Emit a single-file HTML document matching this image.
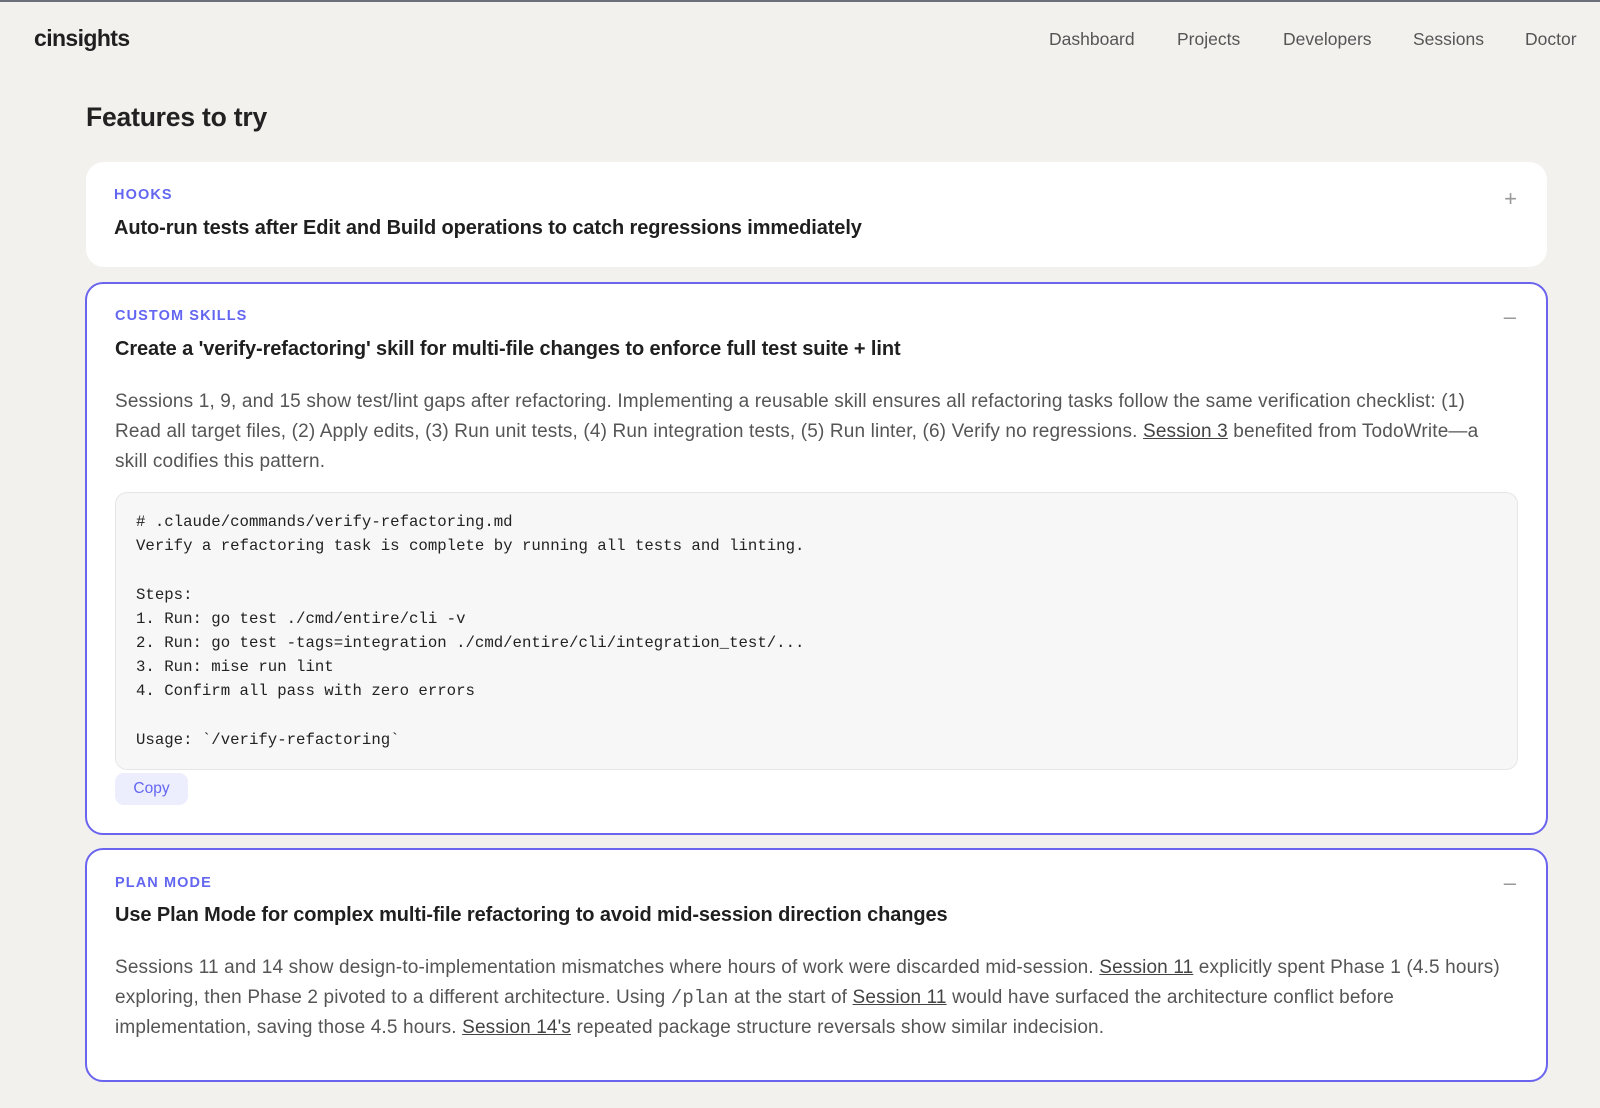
<!DOCTYPE html>
<html><head><meta charset="utf-8"><style>
*{box-sizing:border-box;margin:0;padding:0}
body{width:1600px;height:1108px;background:#f2f1ee;font-family:"Liberation Sans",sans-serif;color:#222;position:relative;overflow:hidden;border-top:2px solid #6b7078}
.logo{position:absolute;left:34px;top:23px;font-size:23px;font-weight:bold;color:#1f1f1f;letter-spacing:-0.6px}
.nav{position:absolute;top:27px;font-size:17.5px;color:#555}
h1{position:absolute;left:86px;top:100px;font-size:26.5px;font-weight:bold;color:#222;letter-spacing:-0.2px}
.card{position:absolute;left:86px;width:1461px;background:#fff;border-radius:18px}
.sel{border:2px solid #6a64ee;left:85px;width:1463px}
.lab{position:absolute;left:28px;font-size:14.5px;font-weight:bold;letter-spacing:1.1px;color:#6366f1}
.ttl{position:absolute;left:28px;font-size:20px;font-weight:bold;color:#1f1f1f;letter-spacing:-0.1px}
.ic{position:absolute;right:30px;color:#999;font-size:22px}
.body{position:absolute;left:28px;font-size:19px;line-height:30.2px;color:#555;letter-spacing:0.15px;white-space:nowrap}
.body u{color:#444}
.code{position:absolute;left:28px;width:1403px;height:278px;background:#f7f7f7;border:1px solid #e6e6e6;border-radius:12px;padding:17px 20px;font-family:"Liberation Mono",monospace;font-size:15.7px;line-height:24.2px;color:#222;white-space:pre}
.copy{position:absolute;left:28px;width:73px;height:32px;background:#ecedfd;border-radius:9px;color:#6366f1;font-size:15.5px;text-align:center;line-height:32px}
</style></head><body>
<div class="logo">cinsights</div>
<div class="nav" style="left:1049px">Dashboard</div>
<div class="nav" style="left:1177px">Projects</div>
<div class="nav" style="left:1283px">Developers</div>
<div class="nav" style="left:1413px">Sessions</div>
<div class="nav" style="left:1525px">Doctor</div>
<h1>Features to try</h1>

<div class="card" style="top:160px;height:105px">
<div class="lab" style="top:25px">HOOKS</div>
<div class="ttl" style="top:55px">Auto-run tests after Edit and Build operations to catch regressions immediately</div>
<div class="ic" style="top:24px">+</div>
</div>

<div class="card sel" style="top:280px;height:553px">
<div class="lab" style="top:24px">CUSTOM SKILLS</div>
<div class="ttl" style="top:54px">Create a 'verify-refactoring' skill for multi-file changes to enforce full test suite + lint</div>
<div class="ic" style="top:20px">–</div>
<div class="body" style="top:103px">Sessions 1, 9, and 15 show test/lint gaps after refactoring. Implementing a reusable skill ensures all refactoring tasks follow the same verification checklist: (1)<br>Read all target files, (2) Apply edits, (3) Run unit tests, (4) Run integration tests, (5) Run linter, (6) Verify no regressions. <u>Session 3</u> benefited from TodoWrite—a<br>skill codifies this pattern.</div>
<div class="code" style="top:208px"># .claude/commands/verify-refactoring.md
Verify a refactoring task is complete by running all tests and linting.

Steps:
1. Run: go test ./cmd/entire/cli -v
2. Run: go test -tags=integration ./cmd/entire/cli/integration_test/...
3. Run: mise run lint
4. Confirm all pass with zero errors

Usage: `/verify-refactoring`</div>
<div class="copy" style="top:489px">Copy</div>
</div>

<div class="card sel" style="top:846px;height:234px">
<div class="lab" style="top:25px">PLAN MODE</div>
<div class="ttl" style="top:54px">Use Plan Mode for complex multi-file refactoring to avoid mid-session direction changes</div>
<div class="ic" style="top:20px">–</div>
<div class="body" style="top:103px">Sessions 11 and 14 show design-to-implementation mismatches where hours of work were discarded mid-session. <u>Session 11</u> explicitly spent Phase 1 (4.5 hours)<br>exploring, then Phase 2 pivoted to a different architecture. Using <span style="font-family:'Liberation Mono',monospace">/plan</span> at the start of <u>Session 11</u> would have surfaced the architecture conflict before<br>implementation, saving those 4.5 hours. <u>Session 14's</u> repeated package structure reversals show similar indecision.</div>
</div>
</body></html>
